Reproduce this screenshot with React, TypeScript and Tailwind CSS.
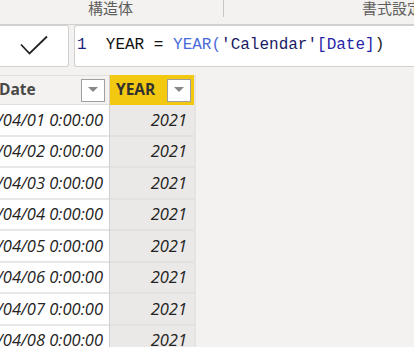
const dates = ["01", "02", "03", "04", "05", "06", "07", "08"]

function DropButton() {
  return (
    <div className="w-[24px] h-[23px] bg-white border border-[#a19f9d] flex items-center justify-center">
      <svg width="10" height="6" viewBox="0 0 10 6">
        <path d="M0 0 L10 0 L5 5 Z" fill="#8a8886" />
      </svg>
    </div>
  )
}

export default function App() {
  return (
    <div
      className="w-[414px] h-[347px] bg-[#f3f2f1] overflow-hidden"
      style={{ fontFamily: '"Open Sans", "Noto Sans CJK JP", sans-serif' }}>
      {/* タブ */}
      <div className="h-[25px] flex border-b border-[#d2d0ce] text-[15px] text-[#605e5c]">
        <div className="w-[224px] shrink-0 h-[17px] flex justify-center leading-[16px] border-r border-[#c8c6c4] pr-[2px]">構造体</div>
        <div className="flex-1 min-w-0 pl-[138px] leading-[16px] whitespace-nowrap overflow-hidden">書式設定</div>
      </div>

      {/* 数式バー */}
      <div className="flex gap-[5px] h-[42px]">
        <div className="w-[69px] bg-white border border-l-0 border-[#d2d0ce] rounded-r-[3px] flex items-center justify-center">
          <svg width="32" height="24" viewBox="0 0 32 24">
            <path d="M3 10.5 L11.5 19.5 L29 2.5" fill="none" stroke="#252423" strokeWidth="1.8" />
          </svg>
        </div>
        <div
          className="flex-1 bg-white border border-r-0 border-[#d2d0ce] rounded-l-[3px] flex items-center pl-[2px] pb-[3px] text-[16px] whitespace-pre"
          style={{ fontFamily: '"Liberation Mono", monospace' }}>
          <span className="text-[#1d1d7e]">1</span>
          <span className="text-[#111111]">  YEAR = </span>
          <span className="text-[#4a6bd8]">YEAR(</span>
          <span className="text-[#1b1a66]">'Calendar'</span>
          <span className="text-[#2525a8]">[Date]</span>
          <span className="text-[#222222]">)</span>
        </div>
      </div>

      {/* テーブル */}
      <div className="flex mt-[8px]">
        <div className="w-[110px] border-r border-[#d2d0ce]">
          <div className="h-[30px] bg-[#f3f2f1] border-y border-[#e1dfdd] flex items-center justify-between pr-[4px]">
            <span className="font-bold text-[15.5px] text-[#494847] -ml-[1px]">Date</span>
            <DropButton />
          </div>
          {dates.map((d) => (
            <div key={d} className="h-[31.5px] bg-white border-b-2 border-[#e9e7e5] flex justify-end items-center overflow-hidden pr-[6px] pt-[1px]">
              <span className="italic text-[16.5px] text-[#252423] whitespace-nowrap">2021/04/{d} 0:00:00</span>
            </div>
          ))}
        </div>
        <div className="w-[86px] border-r-2 border-[#e6e4e2]">
          <div className="h-[30px] bg-[#f2c811] flex items-center justify-between pl-[6px] pr-[3px]">
            <span className="font-bold text-[15.5px] text-[#323130]">YEAR</span>
            <DropButton />
          </div>
          {dates.map((d) => (
            <div key={d} className="h-[31.5px] bg-[#ebe9e7] border-b-2 border-[#e3e1df] flex justify-end items-center pr-[7px] pt-[1px]">
              <span className="italic text-[16.5px] text-[#252423]">2021</span>
            </div>
          ))}
        </div>
      </div>
    </div>
  )
}
